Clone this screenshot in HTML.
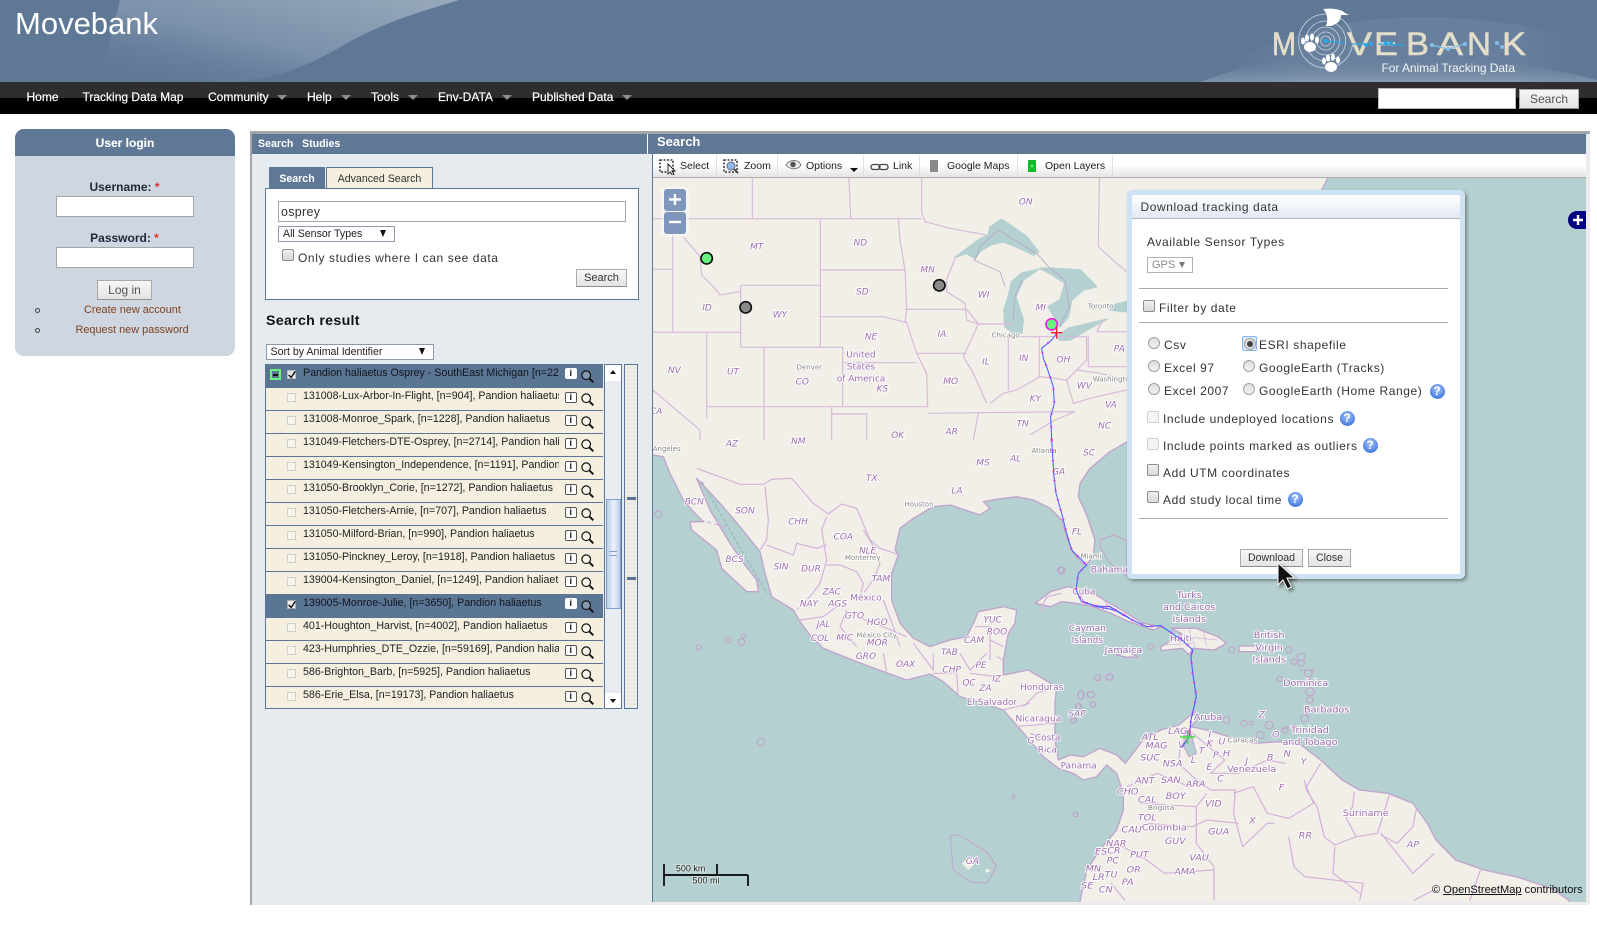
<!DOCTYPE html>
<html lang="en"><head><meta charset="utf-8"><title>Movebank</title>
<style>
*{box-sizing:border-box}
html,body{margin:0;padding:0;background:#fff}
body{position:relative;width:1597px;height:932px;overflow:hidden;font-family:"Liberation Sans",Arial,sans-serif;font-size:12px;color:#222}
.a{position:absolute}
.t{position:absolute;white-space:nowrap;line-height:14px}
.nav{color:#fff;font-size:12px;top:90px;-webkit-text-stroke:.2px #fff}
.arr{position:absolute;top:95px;width:0;height:0;border-left:5px solid transparent;border-right:5px solid transparent;border-top:5px solid #8d8d8d}
.inp{position:absolute;background:#fff;border:1px solid #a5a5a5}
.btn{position:absolute;background:linear-gradient(#f6f6f6,#e4e4e4);border:1px solid #a9a9a9;border-bottom-color:#8f8f8f;color:#333;text-align:center;font-size:11px}
.sel{position:absolute;background:#fff;border:1px solid #8b99a9;font-size:10.6px;color:#222;padding-left:4px;line-height:15px}
.sel i{position:absolute;right:7px;top:4px;width:0;height:0;border-left:3px solid transparent;border-right:3px solid transparent;border-top:7px solid #111}
.cb{position:absolute;width:12px;height:12px;border:1px solid #8d8d8d;border-radius:2px;background:linear-gradient(#eee,#d9d9d9)}
.cb.dis{border-color:#d0d0d0;background:#f4f4f4}
.rd{position:absolute;width:12px;height:12px;border:1px solid #a0a0a0;border-radius:50%;background:linear-gradient(#ddd,#f2f2f2)}
.d{color:#333;font-size:12px;letter-spacing:.58px;position:absolute;white-space:nowrap;line-height:14px}
.hr{position:absolute;left:1139px;width:309px;height:1px;background:#a8a8a8}
.row{position:absolute;left:266px;width:337px;height:23px;background:#f5efe0;border-bottom:1px solid #5b7595}
.row.on{background:#5b7595;border-bottom:0}
.row .x{position:absolute;left:37px;top:1px;width:256px;overflow:hidden;white-space:nowrap;font-size:10.65px;line-height:14px;color:#222}
.row.on .x{color:#11161c}
.row .c{position:absolute;left:21px;top:5px;width:9px;height:9px;border:1px solid #cfcfcf;background:#f7f4ea}
.row.on .c{background:#eee;border-color:#aaa}
.row .i{position:absolute;left:299px;top:4px;width:11.5px;height:11px;border:1px solid #555;border-radius:2px;background:#fff;font:bold 9px/9px "Liberation Sans",sans-serif;text-align:center;color:#111}
.row.on .i{border-color:#fff}
.row svg{position:absolute;left:314.7px;top:5.5px;width:13px;height:13px}
.help{position:absolute;width:15px;height:15px;border-radius:50%;background:radial-gradient(circle at 50% 35%,#a9c6f7,#4a7fe3 70%);color:#fff;font:bold 12px/15px "Liberation Sans",sans-serif;text-align:center}
svg text{font-family:"DejaVu Sans",sans-serif}
.m text{font-size:27px;fill:#a06eb0;stroke:#fff;stroke-width:6px;stroke-opacity:.85;paint-order:stroke;text-anchor:middle}
.m text.s{font-style:italic}
.m text.g{font-size:21px;fill:#868686}
.tb{position:absolute;top:159px;font-size:10.5px;color:#222;line-height:14px;white-space:nowrap}
.sep{position:absolute;top:155px;width:1px;height:21px;background:#e0e0e0}
</style></head><body>

<!-- header -->
<div class="a" style="left:0;top:0;width:1597px;height:82px;background:#5f7896;overflow:hidden">
<svg width="1597" height="82" style="position:absolute;left:0;top:0">
<defs>
<linearGradient id="sw" x1="0" y1="1" x2="1" y2="0"><stop offset="0" stop-color="#5f7896" stop-opacity="0"/><stop offset=".45" stop-color="#7a90aa"/><stop offset="1" stop-color="#98a9bb"/></linearGradient>
<radialGradient id="gl" cx=".5" cy="1" r=".8"><stop offset="0" stop-color="#8ea2b8"/><stop offset=".6" stop-color="#7189a4"/><stop offset="1" stop-color="#5f7896" stop-opacity="0"/></radialGradient>
<linearGradient id="gb" x1="0" y1="0" x2="0" y2="1"><stop offset="0" stop-color="#5f7896" stop-opacity="0"/><stop offset="1" stop-color="#a3b3c4" stop-opacity=".8"/></linearGradient>
<linearGradient id="gf" x1="0" y1="0" x2="1" y2="0"><stop offset="0" stop-color="#5f7896" stop-opacity="0"/><stop offset=".25" stop-color="#7189a4"/><stop offset=".8" stop-color="#7189a4"/><stop offset="1" stop-color="#5f7896" stop-opacity="0"/></linearGradient>
</defs>
<path d="M120,0 L459,0 C420,12 385,22 349,42 C310,65 280,78 238,82 L100,82 Z" fill="url(#sw)"/>
<path d="M1200,82 C1260,40 1340,17 1420,17 C1490,17 1560,30 1597,45 L1597,82 Z" fill="url(#gf)" opacity=".5"/>
<path d="M1200,82 C1270,55 1340,50 1420,55 C1490,58 1550,68 1597,80 L1597,82 Z" fill="url(#gb)" opacity=".6"/>
<g fill="none" stroke="#c9d5e0" stroke-width=".8"><circle cx="1325.7" cy="41" r="27"/><circle cx="1325.7" cy="41" r="20"/><circle cx="1325.7" cy="41" r="14"/><circle cx="1325.7" cy="41" r="9"/><circle cx="1325.7" cy="41" r="5"/></g>
<g fill="#e4dec9" stroke="#e4dec9" stroke-width=".5" font-size="32">
<text x="1272" y="55" textLength="24" lengthAdjust="spacingAndGlyphs" style="font-family:'Liberation Sans',sans-serif">M</text>
<text x="1347" y="55" textLength="25" lengthAdjust="spacingAndGlyphs" style="font-family:'Liberation Sans',sans-serif">V</text>
<text x="1374" y="55" textLength="24" lengthAdjust="spacingAndGlyphs" style="font-family:'Liberation Sans',sans-serif">E</text>
<text x="1406" y="55" textLength="23" lengthAdjust="spacingAndGlyphs" style="font-family:'Liberation Sans',sans-serif">B</text>
<text x="1437" y="55" textLength="26" lengthAdjust="spacingAndGlyphs" style="font-family:'Liberation Sans',sans-serif">A</text>
<text x="1467" y="55" textLength="24" lengthAdjust="spacingAndGlyphs" style="font-family:'Liberation Sans',sans-serif">N</text>
<text x="1502" y="55" textLength="24" lengthAdjust="spacingAndGlyphs" style="font-family:'Liberation Sans',sans-serif">K</text>
</g>
<path d="M1323,9 C1332,8 1341,9 1345,13 L1349,15 L1341,15 C1341,20 1338,24 1331,26 L1326,26 C1328,20 1328,14 1323,9Z" fill="#fff"/>
<g fill="#fff"><ellipse cx="1310" cy="47" rx="6" ry="5"/><ellipse cx="1303" cy="41" rx="2" ry="3.5"/><ellipse cx="1307" cy="38" rx="2" ry="3.5"/><ellipse cx="1312" cy="37" rx="2" ry="3.5"/><ellipse cx="1317" cy="40" rx="2" ry="3.5"/>
<ellipse cx="1331" cy="67" rx="6" ry="5"/><ellipse cx="1324" cy="61" rx="2" ry="3.5"/><ellipse cx="1328" cy="58" rx="2" ry="3.5"/><ellipse cx="1333" cy="57" rx="2" ry="3.5"/><ellipse cx="1338" cy="60" rx="2" ry="3.5"/></g>
<g fill="none" stroke="#2ba6e8" stroke-width="1.2"><path d="M1325,41 L1345,43 M1352,44 L1368,44 M1378,44 L1404,45"/></g>
<g fill="#2ba6e8"><circle cx="1325.5" cy="41" r="2.2"/><circle cx="1366" cy="45" r="2"/><circle cx="1371" cy="44" r="2"/><circle cx="1386" cy="43" r="2"/><circle cx="1391" cy="43" r="2"/></g>
<g fill="none" stroke="#7fbfe8" stroke-width="1.2"><path d="M1431,45 L1448,49 L1465,44"/></g>
<g fill="#7fbfe8"><circle cx="1432" cy="45" r="2"/><circle cx="1448" cy="49" r="2"/><circle cx="1465" cy="44" r="2"/><circle cx="1497" cy="43" r="2"/><circle cx="1502" cy="47" r="2"/></g>
<text x="1381.5" y="72" font-size="12" fill="#f0f3f6" textLength="133.5" style="font-family:'Liberation Sans',sans-serif">For Animal Tracking Data</text>
</svg>
<div class="t" style="left:15px;top:6px;font-size:31px;line-height:36px;color:#fff">Movebank</div>
</div>

<!-- nav -->
<div class="a" style="left:0;top:82px;width:1597px;height:16px;background:#2e2e2e"></div>
<div class="a" style="left:0;top:98px;width:1597px;height:16px;background:#000"></div>
<div class="t nav" style="left:26.5px">Home</div>
<div class="t nav" style="left:82.5px">Tracking Data Map</div>
<div class="t nav" style="left:208px">Community</div><div class="arr" style="left:277px"></div>
<div class="t nav" style="left:307px">Help</div><div class="arr" style="left:341px"></div>
<div class="t nav" style="left:371px">Tools</div><div class="arr" style="left:408px"></div>
<div class="t nav" style="left:438px">Env-DATA</div><div class="arr" style="left:502px"></div>
<div class="t nav" style="left:532px">Published Data</div><div class="arr" style="left:622px"></div>
<div class="inp" style="left:1378px;top:88px;width:138px;height:21px;border-color:#bbb"></div>
<div class="btn" style="left:1519px;top:89px;width:60px;height:20px;line-height:18px;font-size:12px;color:#555">Search</div>

<!-- login -->
<div class="a" style="left:15px;top:129px;width:220px;height:227px;background:#cdd6e1;border-radius:9px;overflow:hidden">
<div style="height:27px;background:#5f7896;color:#fff;font-weight:bold;text-align:center;line-height:28px;font-size:12px;-webkit-text-stroke:.1px #fff">User login</div></div>
<div class="t" style="left:0;width:249px;text-align:center;top:180px;font-weight:bold;color:#1f2a36">Username: <span style="color:#d33">*</span></div>
<div class="inp" style="left:56px;top:196px;width:138px;height:21px"></div>
<div class="t" style="left:0;width:249px;text-align:center;top:231px;font-weight:bold;color:#1f2a36">Password: <span style="color:#d33">*</span></div>
<div class="inp" style="left:56px;top:247px;width:138px;height:21px"></div>
<div class="btn" style="left:97px;top:280px;width:55px;height:20px;line-height:18px;font-size:12px;color:#555">Log in</div>
<div class="t" style="left:84px;top:303px;font-size:10.9px;color:#7f4220">Create new account</div>
<div class="t" style="left:75.5px;top:323px;font-size:10.9px;color:#7f4220">Request new password</div>
<div class="a" style="left:34.5px;top:307.5px;width:5px;height:5px;border:1px solid #444;border-radius:50%"></div>
<div class="a" style="left:34.5px;top:327.5px;width:5px;height:5px;border:1px solid #444;border-radius:50%"></div>

<!-- left panel -->
<div class="a" style="left:250px;top:131px;width:1340px;height:3px;background:#a3a7ab"></div>
<div class="a" style="left:250px;top:131px;width:2px;height:774px;background:#a3a7ab"></div>
<div class="a" style="left:252px;top:134px;width:401px;height:768px;background:#e6ebef"></div>
<div class="a" style="left:252px;top:134px;width:395px;height:20px;background:#5f7896"></div>
<div class="a" style="left:647px;top:134px;width:1px;height:20px;background:#fff"></div>
<div class="t" style="left:258px;top:137px;font-size:10.6px;font-weight:bold;color:#fff">Search</div>
<div class="t" style="left:302px;top:137px;font-size:10.6px;font-weight:bold;color:#fff">Studies</div>

<div class="a" style="left:269px;top:167px;width:56px;height:22px;background:#5f7896;color:#fff;text-align:center;font-size:10.6px;font-weight:bold;line-height:24px">Search</div>
<div class="a" style="left:326px;top:167px;width:107px;height:22px;background:#f5efe0;border:1px solid #5b7595;border-bottom:0;color:#333;text-align:center;font-size:10.6px;line-height:22px">Advanced Search</div>
<div class="a" style="left:265px;top:188px;width:374px;height:112px;background:#fff;border:1px solid #5b7595"></div>
<div class="inp" style="left:278px;top:201px;width:348px;height:21px;font-size:12.5px;line-height:20px;padding-left:2px;letter-spacing:.3px;color:#333">osprey</div>
<div class="sel" style="left:278px;top:226px;width:117px;height:16px;line-height:15px">All Sensor Types<i style="right:8px;top:3px"></i></div>
<div class="cb" style="left:282px;top:249px"></div>
<div class="t" style="left:298px;top:251px;font-size:12px;letter-spacing:.6px;color:#333">Only studies where I can see data</div>
<div class="btn" style="left:576px;top:269px;width:51px;height:18px;line-height:16px">Search</div>
<div class="t" style="left:266px;top:314px;font-size:14.2px;font-weight:bold;letter-spacing:.3px;color:#111">Search result</div>
<div class="sel" style="left:265.5px;top:344px;width:168px;height:16px;line-height:15px">Sort by Animal Identifier<i style="right:8px;top:3px"></i></div>

<!-- list -->
<svg width="0" height="0" style="position:absolute"><defs><g id="mag"><circle cx="5.2" cy="5.2" r="4.3" fill="#fff" fill-opacity=".25" stroke="#111" stroke-width="1.2"/><path d="M8.3,8.3 L12.3,12.3" stroke="#111" stroke-width="2"/></g></defs></svg>
<div class="a" style="left:265px;top:364px;width:338px;height:345px;border:1px solid #5b7595;background:#f5efe0"></div>
<div class="row on" style="top:364px;height:24px"><div class="x" style="top:2px">Pandion haliaetus Osprey - SouthEast Michigan [n=226]</div><div class="c" style="top:6px;border:1px solid #bbb;background:linear-gradient(#ddd,#f2f2f2)"></div><div class="i">i</div><svg viewBox="0 0 13 13"><use href="#mag"/></svg>
<div style="position:absolute;left:4px;top:5px;width:11px;height:11px;border:2px solid #6cf47a;background:#5b7595"><div style="position:absolute;left:1px;top:2.5px;width:5px;height:2px;background:#111"></div></div>
<svg viewBox="0 0 12 12" style="left:21px;top:6px;width:10px;height:10px"><path d="M2,6 L5,9 L10,1.5" fill="none" stroke="#111" stroke-width="1.8"/></svg></div>
<div class="row" style="top:387.7px"><div class="x">131008-Lux-Arbor-In-Flight, [n=904], Pandion haliaetus</div><div class="c"></div><div class="i">i</div><svg viewBox="0 0 13 13"><use href="#mag"/></svg></div>
<div class="row" style="top:410.6px"><div class="x">131008-Monroe_Spark, [n=1228], Pandion haliaetus</div><div class="c"></div><div class="i">i</div><svg viewBox="0 0 13 13"><use href="#mag"/></svg></div>
<div class="row" style="top:433.6px"><div class="x">131049-Fletchers-DTE-Osprey, [n=2714], Pandion haliaetus</div><div class="c"></div><div class="i">i</div><svg viewBox="0 0 13 13"><use href="#mag"/></svg></div>
<div class="row" style="top:456.6px"><div class="x">131049-Kensington_Independence, [n=1191], Pandion haliaetus</div><div class="c"></div><div class="i">i</div><svg viewBox="0 0 13 13"><use href="#mag"/></svg></div>
<div class="row" style="top:479.6px"><div class="x">131050-Brooklyn_Corie, [n=1272], Pandion haliaetus</div><div class="c"></div><div class="i">i</div><svg viewBox="0 0 13 13"><use href="#mag"/></svg></div>
<div class="row" style="top:502.6px"><div class="x">131050-Fletchers-Arnie, [n=707], Pandion haliaetus</div><div class="c"></div><div class="i">i</div><svg viewBox="0 0 13 13"><use href="#mag"/></svg></div>
<div class="row" style="top:525.6px"><div class="x">131050-Milford-Brian, [n=990], Pandion haliaetus</div><div class="c"></div><div class="i">i</div><svg viewBox="0 0 13 13"><use href="#mag"/></svg></div>
<div class="row" style="top:548.6px"><div class="x">131050-Pinckney_Leroy, [n=1918], Pandion haliaetus</div><div class="c"></div><div class="i">i</div><svg viewBox="0 0 13 13"><use href="#mag"/></svg></div>
<div class="row" style="top:571.6px"><div class="x">139004-Kensington_Daniel, [n=1249], Pandion haliaetus</div><div class="c"></div><div class="i">i</div><svg viewBox="0 0 13 13"><use href="#mag"/></svg></div>
<div class="row on" style="top:594px;height:24px"><div class="x" style="top:2px">139005-Monroe-Julie, [n=3650], Pandion haliaetus</div><div class="c" style="left:21px;top:6px"></div><div class="i" style="top:4px">i</div><svg viewBox="0 0 13 13" style="top:6px"><use href="#mag"/></svg>
<svg viewBox="0 0 12 12" style="left:21px;top:6px;width:10px;height:10px"><path d="M2,6 L5,9 L10,1.5" fill="none" stroke="#111" stroke-width="1.8"/></svg></div>
<div class="row" style="top:617.6px"><div class="x">401-Houghton_Harvist, [n=4002], Pandion haliaetus</div><div class="c"></div><div class="i">i</div><svg viewBox="0 0 13 13"><use href="#mag"/></svg></div>
<div class="row" style="top:640.6px"><div class="x">423-Humphries_DTE_Ozzie, [n=59169], Pandion haliaetus</div><div class="c"></div><div class="i">i</div><svg viewBox="0 0 13 13"><use href="#mag"/></svg></div>
<div class="row" style="top:663.6px"><div class="x">586-Brighton_Barb, [n=5925], Pandion haliaetus</div><div class="c"></div><div class="i">i</div><svg viewBox="0 0 13 13"><use href="#mag"/></svg></div>
<div class="row" style="top:686.6px;height:21px;border-bottom:0"><div class="x">586-Erie_Elsa, [n=19173], Pandion haliaetus</div><div class="c"></div><div class="i">i</div><svg viewBox="0 0 13 13"><use href="#mag"/></svg></div>

<!-- scrollbar -->
<div class="a" style="left:604px;top:364px;width:18px;height:345px;background:#e9edf1;border:1px solid #5b7595"></div>
<div class="a" style="left:605px;top:365px;width:16px;height:16px;background:#fff"></div>
<div class="a" style="left:605px;top:693px;width:16px;height:15px;background:#fff"></div>
<div class="a" style="left:610px;top:370px;width:0;height:0;border-left:3.5px solid transparent;border-right:3.5px solid transparent;border-bottom:4px solid #111"></div>
<div class="a" style="left:610px;top:699px;width:0;height:0;border-left:3.5px solid transparent;border-right:3.5px solid transparent;border-top:4px solid #111"></div>
<div class="a" style="left:605.5px;top:499px;width:15px;height:110px;border:1px solid #7f9fcb;background:linear-gradient(90deg,#b9cce9,#edf2fa 50%,#b9cce9)"></div>
<div class="a" style="left:609px;top:551px;width:8px;height:5px;border-top:1px solid #7f9fcb;border-bottom:1px solid #7f9fcb"></div>
<div class="a" style="left:624px;top:364px;width:14px;height:345px;border:1px solid #5b7595;background:repeating-linear-gradient(#f3eee1 0,#f3eee1 2px,#e6e9ea 2px,#e6e9ea 4px)"></div>
<div class="a" style="left:627px;top:497px;width:9px;height:3px;background:#5b7595"></div>
<div class="a" style="left:627px;top:577px;width:9px;height:3px;background:#5b7595"></div>

<!-- right panel -->
<div class="a" style="left:648px;top:134px;width:938px;height:20px;background:#5f7896"></div>
<div class="t" style="left:657px;top:135px;font-size:13px;font-weight:bold;color:#fff">Search</div>
<div class="a" style="left:1586px;top:134px;width:4px;height:771px;background:#ececec"></div>
<div class="a" style="left:252px;top:902px;width:1338px;height:3px;background:#ececec"></div>
<div class="a" style="left:652px;top:154px;width:1px;height:748px;background:#5b7595"></div>
<div class="a" style="left:653px;top:154px;width:933px;height:24px;background:linear-gradient(#fff,#fff 45%,#e4e4e4);border-bottom:1px solid #b0b0b0"></div>
<div class="sep" style="left:716px"></div><div class="sep" style="left:777px"></div><div class="sep" style="left:863px"></div><div class="sep" style="left:919px"></div><div class="sep" style="left:1017px"></div><div class="sep" style="left:1112px"></div>
<svg class="a" style="left:658px;top:157px" width="450" height="18" viewBox="658 157 450 18">
<rect x="660" y="160" width="13" height="12" fill="none" stroke="#111" stroke-width="1.3" stroke-dasharray="2 1.5"/>
<path d="M668,164 L668,174 L670.5,172 L672.5,175.5 L674,174.5 L672,171 L675,171Z" fill="#fff" stroke="#111" stroke-width=".9"/>
<rect x="724" y="160" width="13" height="12" fill="none" stroke="#111" stroke-width="1.3" stroke-dasharray="2 1.5"/>
<circle cx="731" cy="166" r="4" fill="#8db7ee" stroke="#667"/><path d="M734,169 L738,173" stroke="#333" stroke-width="1.6"/>
<path d="M786,165 C790,159 798,159 801,165 C798,170 790,170 786,165Z" fill="#eee" stroke="#777"/><circle cx="793" cy="164.5" r="2.8" fill="#555"/>
<path d="M850,168 h8 l-4,4z" fill="#111"/>
<g fill="none" stroke="#444" stroke-width="1.3"><rect x="871" y="164.5" width="9" height="5" rx="2.5"/><rect x="879" y="164.5" width="9" height="5" rx="2.5"/></g>
<rect x="930" y="160" width="8" height="12" fill="#8a8a8a"/>
<rect x="1028" y="160" width="8" height="12" fill="#12b92a"/><circle cx="1032" cy="166" r="1.5" fill="#4df05c"/>
</svg>
<div class="tb" style="left:680px">Select</div>
<div class="tb" style="left:744px">Zoom</div>
<div class="tb" style="left:806px">Options</div>
<div class="tb" style="left:893px">Link</div>
<div class="tb" style="left:947px">Google Maps</div>
<div class="tb" style="left:1045px">Open Layers</div>

<!-- map -->
<svg class="a m" style="left:653px;top:178px" width="933" height="724" viewBox="653 178 933 724">
<rect x="653" y="178" width="933" height="724" fill="#b5d0d0"/>
<g transform="translate(650,440) scale(.33333)">
<path fill="#f2efe9" stroke="#c0a3cd" stroke-width="4" stroke-linejoin="round" d="M0,-800 L2040,-800 L1990,-700 L1500,-200 L1432,5 L1380,35 L1320,85 L1290,130 L1285,170 L1310,225 L1335,300 L1330,350 L1305,378 L1270,340 L1250,290 L1235,240 L1200,205 L1150,180 L1100,170 L1040,178 L1000,185 L1020,205 L990,225 L960,215 L900,195 L850,200 L790,235 L750,265 L735,330 L745,345 L725,400 L725,480 L750,550 L790,595 L840,620 L900,600 L950,590 L975,540 L985,515 L1060,500 L1100,510 L1095,550 L1075,580 L1060,660 L1060,705 L1135,690 L1220,740 L1215,790 L1215,850 L1215,900 L1225,960 L1260,945 L1300,950 L1350,925 L1400,945 L1426,970 L1479,900 L1532,870 L1586,855 L1623,825 L1650,825 L1623,860 L1671,870 L1735,890 L1809,910 L1895,905 L1953,915 L2012,960 L2076,1020 L2129,1050 L2214,1060 L2289,1090 L2332,1150 L2358,1200 L2417,1260 L2502,1290 L2598,1310 L2705,1345 L2758,1382 L2758,1500 L1285,1500 L1290,1383 L1300,1340 L1310,1290 L1350,1230 L1400,1170 L1420,1110 L1420,1060 L1400,1000 L1370,975 L1340,1010 L1300,1020 L1270,1000 L1225,985 L1180,950 L1130,890 L1060,810 L1000,790 L930,770 L880,725 L840,702 L770,720 L700,695 L620,665 L520,625 L480,585 L450,545 L430,510 L365,470 L345,400 L330,335 L270,260 L210,190 L140,115 L180,210 L240,310 L285,375 L320,420 L325,455 L290,455 L215,385 L200,330 L125,270 L120,245 L160,245 L130,215 L100,180 L60,100 L40,50 L8,45 L0,45 Z"/>
<g fill="none" stroke="#d3b2d9" stroke-width="3.5">
<path d="M140,85 L270,133 L340,133 L365,118 L425,115 L490,190 L535,222 L575,192 L620,205 L660,300 L690,325 L750,345"/>
<path d="M345,140 L355,240 L350,300 L330,330 M350,315 L430,345 L440,310 L500,325 L530,315 M515,270 L530,230 M515,270 L530,360 L510,430 L480,470 L440,510 M530,375 L570,375 L620,395 L640,430 L630,470 M640,270 L665,310 L690,370 L670,420 L640,460 M700,480 L730,560 L750,620 M590,510 L570,560 L620,620 M450,540 L520,530 L560,500 M620,530 L700,560 L770,590 M700,640 L710,700 M850,640 L850,690 L790,610 M975,560 L1020,560 L1020,660 M1020,600 L1060,620 M930,640 L960,690 L1010,640 M850,700 L920,700 L925,770 M960,700 L1040,710 M1060,660 L1040,650 M1120,800 L1160,760 L1200,745 M1060,810 L1140,790 M1095,860 L1215,850 M1140,880 L1200,900"/>
<path d="M150,240 L240,265" stroke-dasharray="14 8"/><path d="M155,125 L350,460" stroke="#9eb0ba" stroke-dasharray="10 6"/>
</g>
<g fill="none" stroke="#c0a3cd" stroke-width="3">
<circle cx="25" cy="223" r="11"/><circle cx="235" cy="600" r="8"/><circle cx="146" cy="622" r="8"/><circle cx="274" cy="606" r="10"/><circle cx="280" cy="588" r="7"/><circle cx="333" cy="906" r="11"/><circle cx="1090" cy="1070" r="5"/><circle cx="1276" cy="1123" r="7"/><circle cx="1235" cy="392" r="10"/><ellipse cx="1342" cy="713" rx="10" ry="8"/><ellipse cx="1378" cy="711" rx="11" ry="8"/><ellipse cx="1292" cy="765" rx="8" ry="13"/><ellipse cx="1323" cy="764" rx="11" ry="9"/><ellipse cx="1285" cy="800" rx="9" ry="8"/><ellipse cx="1328" cy="793" rx="8" ry="9"/><ellipse cx="1270" cy="842" rx="8" ry="7"/>
<path d="M900,1190 C925,1170 960,1210 1010,1235 L1040,1280 L1010,1330 L960,1325 L910,1290 Z"/>
</g>
<path d="M935,1270 l25,-20 l15,20 l-20,20z M1005,1290 l10,-5 l5,10 l-12,3z" fill="#f2efe9"/>
<path d="M1350,300 L1390,285 L1430,300 L1430,410 L1380,370 L1350,320Z" fill="none" stroke="#c0a3cd" stroke-width="3"/>
</g>

<g transform="translate(1040,560) scale(.3552,.33333)">
<path fill="#f2efe9" stroke="#c0a3cd" stroke-width="4" stroke-linejoin="round" d="M-14,130 L30,95 L80,80 L150,100 L230,150 L290,190 L340,200 L320,210 L250,185 L200,160 L150,140 L100,130 L60,125 L30,140 Z M340,260 L400,222 L370,205 L440,205 L500,230 L525,250 L490,270 L430,265 L420,285 L400,265 L340,272 Z M215,285 L245,275 L275,290 L245,292 Z M560,258 L610,258 L610,275 L560,275 Z"/>
<path d="M405,510 L425,520 L440,580 L420,590 L405,560 Z" fill="#b5d0d0" stroke="#c0a3cd" stroke-width="3"/>
<g fill="none" stroke="#d3b2d9" stroke-width="3.5">
<path d="M425,500 L395,560 L390,610 L430,650 L480,690 L550,690 L545,760 L570,860 L640,790 L660,790 M545,700 L600,680 L640,760 L700,775 L770,730 L750,680 L790,610 M745,660 L750,690 L780,740 L800,830 L830,855 L890,830 L950,820 L985,700 M885,695 L880,740 L860,770 L890,830 M960,820 L1050,940 L1110,880 M1060,745 L1050,800 L1005,850 L960,825 M830,860 L825,940 L900,1000 M245,680 L330,640 L420,680 M280,730 L440,740 L470,700 M300,790 L430,800 L470,780 L560,790 M440,740 L440,850 L490,920 L490,1022 M200,840 L300,900 L350,940 L490,930 M700,830 L715,920 L745,950 L910,970 L900,1022 M1240,930 L1210,1022 M240,1022 L200,970 M430,520 L520,600 L480,640 L560,640 L640,600 L690,610 M1050,1022 L1110,990"/>
<path d="M370,225 L500,240 M350,255 L430,250 M420,210 L440,270 M460,215 L470,260" stroke-width="2"/>
<path d="M60,100 L20,110 L0,150 M100,85 L130,135 M175,115 L210,155"/>
</g>
<g fill="none" stroke="#c0a3cd" stroke-width="3">
<circle cx="58" cy="30" r="9"/><circle cx="312" cy="260" r="8"/><circle cx="540" cy="270" r="9"/><circle cx="700" cy="270" r="9"/><circle cx="735" cy="290" r="11"/><circle cx="735" cy="310" r="9"/><circle cx="715" cy="305" r="8"/><circle cx="755" cy="340" r="11"/><circle cx="675" cy="357" r="8"/><circle cx="760" cy="395" r="12"/><circle cx="760" cy="420" r="9"/><circle cx="745" cy="475" r="11"/><circle cx="690" cy="510" r="9"/><circle cx="645" cy="495" r="11"/><circle cx="620" cy="525" r="11"/><circle cx="595" cy="490" r="6"/><circle cx="575" cy="490" r="9"/><circle cx="525" cy="480" r="10"/><circle cx="100" cy="763" r="7"/><circle cx="162" cy="353" r="9"/><circle cx="195" cy="351" r="10"/><ellipse cx="115" cy="405" rx="9" ry="13"/><ellipse cx="143" cy="403" rx="11" ry="9"/><circle cx="150" cy="433" r="8"/><circle cx="108" cy="438" r="8"/><circle cx="95" cy="480" r="8"/>
<path d="M680,510 L720,495 M745,440 L755,470 M730,330 L770,330 L750,380"/>
</g>
</g>

<!-- Great lakes / US borders -->
<g transform="translate(650,140) scale(.33333)">
<path fill="#b5d0d0" stroke="#b5d0d0" stroke-width="5" stroke-linejoin="round" d="M915,352 L945,330 L985,300 L1015,285 L1020,262 L1055,238 L1090,262 L1130,290 L1165,335 L1150,345 L1110,325 L1060,305 L1020,315 L990,335 L975,355 L950,340Z M1065,560 L1062,510 L1075,470 L1085,425 L1115,400 L1165,388 L1120,420 L1097,470 L1120,540 L1115,580 L1090,580Z M1170,385 L1210,385 L1290,390 L1340,440 L1300,450 L1265,480 L1255,530 L1230,560 L1195,500 L1230,480 L1245,430 L1200,400Z M1220,590 L1255,565 L1370,538 L1310,570 L1260,600 L1230,600Z M1370,500 L1430,485 L1430,515 L1380,510Z"/>
<g fill="none" stroke="#d7b9da" stroke-width="3.5">
<path d="M8,236 L815,236 M307,113 L307,236 M597,113 L602,236 M815,113 L815,215 L825,245 L900,265 L1010,285"/>
<path d="M68,236 L68,575 M8,388 L68,388 M100,290 L150,350 L155,405 L190,440 L210,465 L270,455"/>
<path d="M272,436 L510,436 M511,236 L511,622 M272,436 L272,622 L578,622 L578,800 M342,622 L342,900 M511,390 L765,390 M511,530 L700,530 L770,548 L800,640 L830,700 L833,800 M8,577 L272,577 M170,577 L170,835 M170,800 L833,800"/>
<path d="M8,750 L150,870 L150,900 M545,800 L545,900 M545,822 L650,822 L650,900"/>
<path d="M745,236 L750,300 L765,390 L770,510 L765,548 M765,508 L950,508 L985,552 L1090,552 M915,355 L890,420 L890,455 L945,490 L950,540 L985,552 L940,650 L970,700 L1010,790 M800,640 L950,640 M578,668 L800,668"/>
<path d="M1075,590 L1075,750 M1068,590 L1310,590 M1168,590 L1168,710 M1310,590 L1310,660 L1280,690 L1250,720 L1170,710 L1100,750 L1060,760 L1020,790 M835,820 L1275,815 M1315,590 L1315,680 L1430,680 M1340,575 L1430,575 M1348,113 L1345,320 L1400,370 L1430,395 M1275,815 L1215,840 L1140,885 M985,820 L970,900 M1280,690 L1350,700 L1430,720 M1250,720 L1270,790 L1340,770 L1430,750 M1340,575 L1360,540"/>
</g>
<g fill="none" stroke="#b9a4c8" stroke-width="2.5"><path d="M975,360 L990,320 L1045,270 L1165,345 L1195,380 L1245,420 L1258,500 L1230,560 M1090,540 L1095,470 L1115,420 M970,360 L1050,395 L1065,440"/></g>
<text class="s" x="1127" y="193">ON</text><text class="s" x="320" y="329">MT</text><text class="s" x="631" y="316">ND</text><text class="s" x="833" y="398">MN</text><text class="s" x="637" y="464">SD</text><text class="s" x="1001" y="473">WI</text><text class="s" x="1172" y="511">MI</text><text class="s" x="171" y="511">ID</text><text class="s" x="390" y="533">WY</text><text class="s" x="663" y="599">NE</text><text class="s" x="876" y="591">IA</text>
<text x="633" y="652">United</text><text x="633" y="688">States</text><text x="633" y="724">of America</text>
<text class="s" x="697" y="754">KS</text><text class="g" x="478" y="688">Denver</text><text class="s" x="457" y="734">CO</text><text class="s" x="73" y="699">NV</text><text class="s" x="249" y="704">UT</text><text class="s" x="1121" y="663">IN</text><text class="s" x="1240" y="667">OH</text><text class="s" x="1008" y="674">IL</text><text class="s" x="902" y="732">MO</text><text class="s" x="1156" y="784">KY</text><text class="s" x="1303" y="745">WV</text><text class="s" x="1383" y="803">VA</text><text class="s" x="1118" y="860">TN</text><text class="s" x="905" y="884">AR</text><text class="s" x="1364" y="865">NC</text><text class="s" x="743" y="894">OK</text><text class="s" x="1408" y="634">PA</text><text class="s" x="18" y="822">CA</text>
<text class="g" x="1352" y="506">Toronto</text><text class="g" x="1067" y="593">Chicago</text><text class="g" x="1390" y="725">Washington</text>
</g>
<g transform="translate(650,440) scale(.33333)">
<text class="s" x="246" y="19">AZ</text><text class="g" x="50" y="33">Angeles</text><text class="s" x="445" y="12">NM</text><text class="g" x="1182" y="39">Atlanta</text><text class="s" x="1317" y="47">SC</text><text class="s" x="999" y="76">MS</text><text class="s" x="1097" y="65">AL</text><text class="s" x="1226" y="103">GA</text><text class="s" x="665" y="123">TX</text><text class="s" x="921" y="161">LA</text><text class="g" x="807" y="200">Houston</text><text class="s" x="133" y="194">BCN</text><text class="s" x="285" y="221">SON</text><text class="s" x="444" y="254">CHH</text><text class="s" x="1281" y="283">FL</text><text class="s" x="580" y="299">COA</text><text class="s" x="653" y="341">NLE</text><text class="g" x="638" y="360">Monterrey</text><text class="s" x="254" y="366">BCS</text><text class="g" x="1323" y="355">Miami</text><text class="s" x="393" y="388">SIN</text><text class="s" x="483" y="394">DUR</text><text x="1385" y="397">Bahamas</text><text class="s" x="693" y="425">TAM</text><text class="s" x="545" y="463">ZAC</text><text x="1302" y="463">Cuba</text><text x="648" y="482">México</text><text class="s" x="477" y="500">NAY</text><text class="s" x="563" y="500">AGS</text><text class="s" x="613" y="536">GTO</text><text class="s" x="682" y="555">HGO</text><text class="s" x="1028" y="548">YUC</text><text class="s" x="521" y="561">JAL</text><text x="1312" y="573">Cayman</text><text class="s" x="1041" y="584">ROO</text><text class="g" x="680" y="592">México City</text><text class="s" x="510" y="603">COL</text><text class="s" x="584" y="601">MIC</text><text class="s" x="972" y="609">CAM</text><text x="1312" y="609">Islands</text><text class="s" x="682" y="617">MOR</text><text class="s" x="898" y="645">TAB</text><text class="s" x="648" y="657">GRO</text><text class="s" x="767" y="681">OAX</text><text class="s" x="993" y="684">PE</text><text class="s" x="905" y="698">CHP</text><text class="s" x="1040" y="724">IZ</text><text class="s" x="957" y="737">QC</text><text class="s" x="1006" y="753">ZA</text><text x="1175" y="750">Honduras</text><text x="1026" y="795">El Salvador</text><text class="s" x="1281" y="829">SAP</text><text x="1165" y="845">Nicaragua</text><text class="s" x="1143" y="910">G</text><text x="1193" y="901">Costa</text><text x="1192" y="937">Rica</text><text x="1286" y="986">Panama</text><text class="s" x="967" y="1272">GA</text>
</g>
<g transform="translate(1040,560) scale(.3552,.33333)">
<text x="420" y="114">Turks</text><text x="420" y="150">and Caicos</text><text x="420" y="186">Islands</text><text x="235" y="279">Jamaica</text><text x="397" y="244">Haiti</text><text x="645" y="234">British</text><text x="645" y="271">Virgin</text><text x="645" y="307">Islands</text><text x="748" y="378">Dominica</text><text x="807" y="457">Barbados</text><text class="s" x="624" y="472">Z</text><text x="473" y="480">Aruba</text><text class="s" x="388" y="522">LAG</text><text x="760" y="519">Trinidad</text><text x="760" y="555">and Tobago</text><text class="s" x="664" y="532">O</text><text class="s" x="478" y="532">I</text><text class="s" x="310" y="540">ATL</text><text class="g" x="570" y="547">Caracas</text><text class="s" x="478" y="559">K</text><text class="s" x="512" y="554">U</text><text class="s" x="328" y="566">MAG</text><text class="s" x="455" y="581">T</text><text class="s" x="398" y="564">V</text><text class="s" x="495" y="594">P</text><text class="s" x="525" y="590">H</text><text class="s" x="582" y="612">J</text><text class="s" x="648" y="601">B</text><text class="s" x="696" y="590">N</text><text class="s" x="742" y="613">Y</text><text class="s" x="310" y="601">SUC</text><text class="s" x="432" y="609">L</text><text class="s" x="373" y="620">NSA</text><text class="s" x="477" y="630">E</text><text x="596" y="636">Venezuela</text><text class="s" x="295" y="670">ANT</text><text class="s" x="368" y="669">SAN</text><text class="s" x="508" y="665">C</text><text class="s" x="438" y="681">ARA</text><text class="s" x="680" y="692">F</text><text class="s" x="247" y="704">CHO</text><text class="s" x="382" y="717">BOY</text><text class="s" x="302" y="727">CAL</text><text class="s" x="488" y="739">VID</text><text class="g" x="341" y="750">Bogotá</text><text x="917" y="768">Suriname</text><text class="s" x="302" y="782">TOL</text><text class="s" x="598" y="790">X</text><text x="350" y="811">Colombia</text><text class="s" x="258" y="817">CAU</text><text class="s" x="503" y="824">GUA</text><text class="s" x="747" y="836">RR</text><text class="s" x="381" y="852">GUV</text><text class="s" x="215" y="859">NAR</text><text class="s" x="1050" y="863">AP</text><text class="s" x="172" y="884">ES</text><text class="s" x="208" y="881">CR</text><text class="s" x="280" y="892">PUT</text><text class="s" x="448" y="901">VAU</text><text class="s" x="205" y="911">PC</text><text class="s" x="150" y="935">MN</text><text class="s" x="264" y="937">OR</text><text class="s" x="165" y="960">LR</text><text class="s" x="200" y="952">TU</text><text class="s" x="408" y="944">AMA</text><text class="s" x="247" y="975">PA</text><text class="s" x="133" y="985">SE</text><text class="s" x="185" y="998">CN</text>
</g>

<!-- track -->
<g fill="none">
<g transform="translate(650,140) scale(.33333)"><path d="M1220,580 L1205,600 L1175,625 L1180,655 L1190,680 L1210,740 L1213,790 L1202,830 L1205,900" stroke="#3f5cff" stroke-width="3"/><path d="M1220,580 L1205,600 L1175,625 L1180,655 L1190,680 L1210,740 L1213,790 L1202,830 L1205,900" stroke="#e23cf0" stroke-width="7" stroke-dasharray="4 34"/></g>
<g transform="translate(650,440) scale(.33333)"><path d="M1205,0 L1212,110 L1218,160 L1235,220 L1250,280 L1265,330 L1310,375 L1285,400 L1278,450 L1295,485 L1340,498 L1380,500 L1440,535" stroke="#3f5cff" stroke-width="3"/><path d="M1205,0 L1212,110 L1218,160 L1235,220 L1250,280 L1265,330 L1310,375 L1285,400 L1278,450 L1295,485 L1340,498 L1380,500 L1440,535" stroke="#e23cf0" stroke-width="7" stroke-dasharray="4 26"/></g>
<g transform="translate(1040,560) scale(.3552,.33333)"><path d="M120,125 L160,140 L210,150 L260,180 L300,200 L340,197 L400,240 L430,270 L425,290 L430,340 L440,410 L425,480 L420,530 L400,562" stroke="#3f5cff" stroke-width="3"/><path d="M120,125 L160,140 L210,150 L260,180 L300,200 L340,197 L400,240 L430,270 L425,290 L430,340 L440,410 L425,480 L420,530 L400,562" stroke="#e23cf0" stroke-width="7" stroke-dasharray="4 26"/></g>
</g>
<!-- markers -->
<g transform="translate(650,140) scale(.33333)" stroke="#111" stroke-width="5">
<circle cx="170" cy="355" r="17" fill="#66f47c"/><circle cx="287" cy="502" r="17" fill="#8a8a8a"/><circle cx="868" cy="436" r="17" fill="#8a8a8a"/>
<circle cx="1205" cy="553" r="17" fill="#66f47c" stroke="#f01fe0"/><path d="M1203,578 H1237 M1220,561 V596" stroke="#f01f30" stroke-width="4"/>
</g>
<path d="M1187.500,730 V744 M1180,737 H1195" stroke="#40e040" stroke-width="1.4"/>
<!-- zoom ctrl -->
<rect x="661" y="187" width="28" height="50" rx="4" fill="#fff" fill-opacity=".4"/>
<rect x="664" y="189" width="22" height="22" rx="3" fill="#7f97bc"/><rect x="664" y="212" width="22" height="22" rx="3" fill="#7f97bc"/>
<path d="M669,199.500 H681 M675,194 V205" stroke="#fff" stroke-width="2.400"/><path d="M669,222 H681" stroke="#fff" stroke-width="2.400"/>
<!-- scale -->
<g transform="translate(650,440) scale(.33333)"><path d="M42,1272 V1338 M42,1305 H294 M201,1272 V1305 M294,1305 V1338" stroke="#000" stroke-width="5" fill="none"/>
<text x="122" y="1295" style="font-family:'Liberation Sans',sans-serif;fill:#222;stroke-opacity:.4">500 km</text><text x="168" y="1331" style="font-family:'Liberation Sans',sans-serif;fill:#222;stroke-opacity:.4">500 mi</text></g>
<!-- blue plus -->
<path d="M1586,211 H1577 A9,9 0 0 0 1577,229 H1586Z" fill="#000080"/><path d="M1573,220 H1583 M1578,215 V225" stroke="#fff" stroke-width="2.400"/>
</svg>
<div class="t" style="left:1432px;top:883px;font-size:11.1px;color:#111">© <span style="text-decoration:underline">OpenStreetMap</span> contributors</div>

<!-- dialog -->
<div class="a" style="left:1127px;top:190px;width:338px;height:389px;background:#cfe2f3;border-radius:5px;box-shadow:2px 2px 3px rgba(70,70,70,.55)"></div>
<div class="a" style="left:1132px;top:195px;width:328px;height:379px;background:#fff"></div>
<div class="a" style="left:1132px;top:195px;width:328px;height:24px;background:linear-gradient(#fff,#e2e9f3);border-bottom:1px solid #b5b5b5"></div>
<div class="d" style="left:1140.500px;top:199.500px">Download tracking data</div>
<div class="d" style="left:1147px;top:234.500px">Available Sensor Types</div>
<div class="a" style="left:1147px;top:257px;width:46px;height:16px;border:1px solid #b0b0b0;background:#fff;font-size:11px;line-height:14px;padding-left:4px;color:#8a8a8a">GPS<i style="position:absolute;right:7px;top:4px;width:0;height:0;border-left:3px solid transparent;border-right:3px solid transparent;border-top:6px solid #777"></i></div>
<div class="hr" style="top:288px"></div>
<div class="cb" style="left:1143px;top:300px"></div><div class="d" style="left:1159px;top:300.500px">Filter by date</div>
<div class="hr" style="top:322px"></div>
<div class="rd" style="left:1147.700px;top:337px"></div><div class="d" style="left:1164px;top:338px">Csv</div>
<div class="a" style="left:1242px;top:336px;width:15px;height:15px;border:1px solid #8ab7f0;border-radius:2px;background:#dce9fb"></div>
<div class="rd" style="left:1243.500px;top:337.500px;background:radial-gradient(circle,#444 0,#444 2.500px,#e0e0e0 3.500px)"></div><div class="d" style="left:1259px;top:338px">ESRI shapefile</div>
<div class="rd" style="left:1147.700px;top:360px"></div><div class="d" style="left:1164px;top:361px">Excel 97</div>
<div class="rd" style="left:1242.700px;top:360px"></div><div class="d" style="left:1259px;top:361px">GoogleEarth (Tracks)</div>
<div class="rd" style="left:1147.700px;top:383px"></div><div class="d" style="left:1164px;top:384px">Excel 2007</div>
<div class="rd" style="left:1242.700px;top:383px"></div><div class="d" style="left:1259px;top:384px">GoogleEarth (Home Range)</div>
<div class="help" style="left:1429.500px;top:383.500px">?</div>
<div class="cb dis" style="left:1147px;top:411px"></div><div class="d" style="left:1163px;top:411.500px">Include undeployed locations</div><div class="help" style="left:1339.500px;top:410.500px">?</div>
<div class="cb dis" style="left:1147px;top:438px"></div><div class="d" style="left:1163px;top:438.500px">Include points marked as outliers</div><div class="help" style="left:1362.500px;top:437.500px">?</div>
<div class="cb" style="left:1147px;top:464px"></div><div class="d" style="left:1163px;top:465.500px">Add UTM coordinates</div>
<div class="cb" style="left:1147px;top:491px"></div><div class="d" style="left:1163px;top:492.500px">Add study local time</div><div class="help" style="left:1287.500px;top:491.500px">?</div>
<div class="hr" style="top:518px"></div>
<div class="btn" style="left:1240px;top:549px;width:63px;height:18px;line-height:16px;font-size:10.6px">Download</div>
<div class="btn" style="left:1308px;top:549px;width:43px;height:18px;line-height:16px;font-size:10.6px">Close</div>
<svg class="a" style="left:1270px;top:558px;overflow:visible" width="30" height="36" viewBox="0 0 30 36"><path d="M8,5 L8,27 L13,22 L17.500,31 L21.500,29 L17,20 L24.500,20 Z" fill="#111" stroke="#fff" stroke-width="1" style="filter:drop-shadow(2px 2px 1.500px rgba(0,0,0,.5))"/></svg>

</body></html>
